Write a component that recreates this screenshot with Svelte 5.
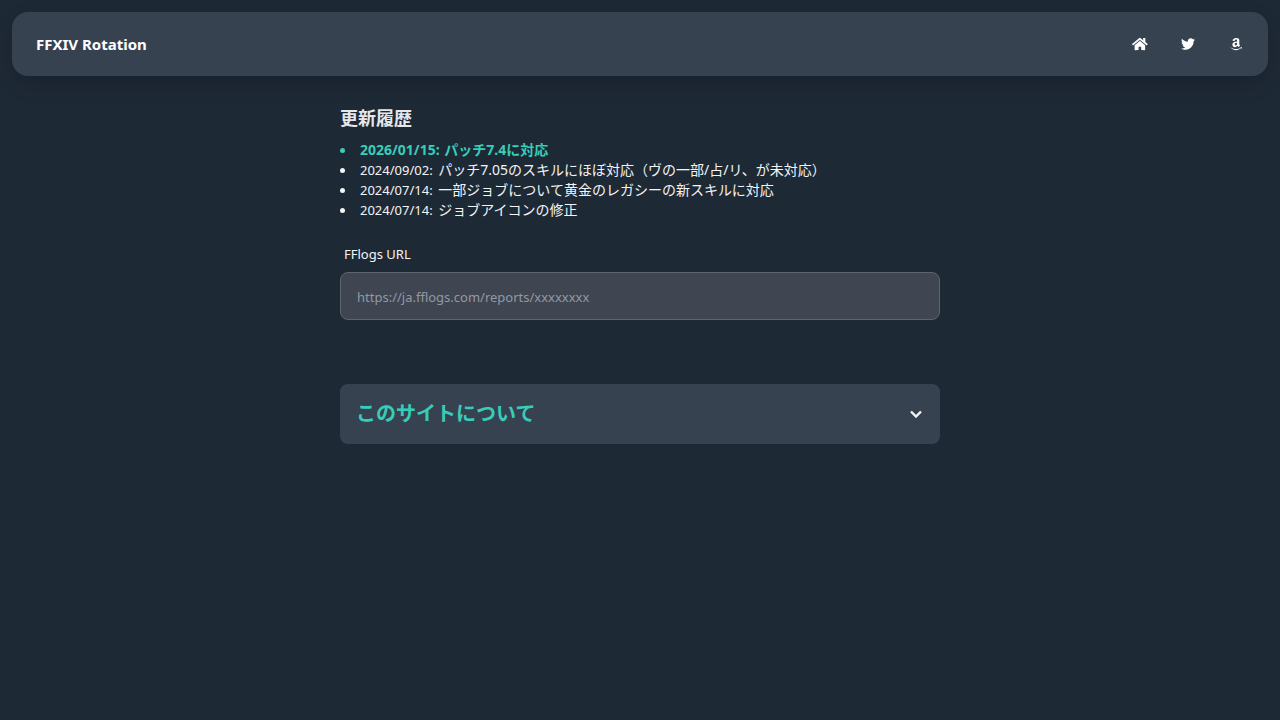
<script>
  const links = [
    {
      label: 'Home',
      href: '#home',
      viewBox: '0 0 576 512',
      path: 'M280.37 148.26L96 300.11V464a16 16 0 0 0 16 16l112.06-.29a16 16 0 0 0 15.92-16V368a16 16 0 0 1 16-16h64a16 16 0 0 1 16 16v95.64a16 16 0 0 0 16 16.05L464 480a16 16 0 0 0 16-16V300L295.67 148.26a12.19 12.19 0 0 0-15.3 0zM571.6 251.47L488 182.56V44.05a12 12 0 0 0-12-12h-56a12 12 0 0 0-12 12v72.61L318.47 43a48 48 0 0 0-61 0L4.34 251.47a12 12 0 0 0-1.6 16.9l25.5 31A12 12 0 0 0 45.15 301l235.22-193.74a12.19 12.19 0 0 1 15.3 0L530.9 301a12 12 0 0 0 16.9-1.6l25.5-31a12 12 0 0 0-1.7-16.93z',
    },
    {
      label: 'Twitter',
      href: '#twitter',
      viewBox: '0 0 512 512',
      path: 'M459.37 151.716c.325 4.548.325 9.097.325 13.645 0 138.72-105.583 298.558-298.558 298.558-59.452 0-114.68-17.219-161.137-47.106 8.447.974 16.568 1.299 25.34 1.299 49.055 0 94.213-16.568 130.274-44.832-46.132-.975-84.792-31.188-98.112-72.772 6.498.974 12.995 1.624 19.818 1.624 9.421 0 18.843-1.3 27.614-3.573-48.081-9.747-84.143-51.98-84.143-102.985v-1.299c13.969 7.797 30.214 12.67 47.431 13.319-28.264-18.843-46.781-51.005-46.781-87.391 0-19.492 5.197-37.36 14.294-52.954 51.655 63.675 129.3 105.258 216.365 109.807-1.624-7.797-2.599-15.918-2.599-24.04 0-57.828 46.782-104.934 104.934-104.934 30.213 0 57.502 12.67 76.67 33.137 23.715-4.548 46.456-13.32 66.599-25.34-7.798 24.366-24.366 44.833-46.132 57.827 21.117-2.273 41.584-8.122 60.426-16.243-14.292 20.791-32.161 39.308-52.628 54.253z',
    },
    {
      label: 'Amazon',
      href: '#amazon',
      viewBox: '0 0 448 512',
      path: 'M257.2 162.7c-48.7 1.8-169.5 15.5-169.5 117.5 0 109.5 138.3 114 183.5 43.2 6.5 10.2 35.4 37.5 45.3 46.8l56.8-56S341 288.9 341 261.4V114.3C341 89 316.5 32 228.7 32 140.7 32 94 87 94 136.3l73.5 6.8c16.3-49.5 54.2-49.5 54.2-49.5 40.7-.1 35.5 29.8 35.5 69.1zm0 86.8c0 80-84.2 68-84.2 17.2 0-47.2 50.5-56.7 84.2-57.8v40.6zm136 163.5c-7.7 10-70 67-174.5 67S34.2 408.5 9.7 379c-6.8-7.7 1-11.3 5.5-8.3C88.5 415.2 203 488.5 387.7 401c7.5-3.7 13.3 2 5.5 12zm39.8 2.2c-6.5 15.8-16 26.8-21.2 31-5.5 4.5-9.5 2.7-6.5-3.8s19.3-46.5 12.7-55c-6.5-8.3-37-4.3-48-3.2-10.8 1-13 2-14-.3-2.3-5.7 21.7-15.5 37.5-17.5 15.7-1.8 41-.8 46 5.7 3.7 5.1 0 27.1-6.5 43.1z',
    },
  ];

  const updates = [
    { date: '2026/01/15', text: 'パッチ7.4に対応', latest: true },
    { date: '2024/09/02', text: 'パッチ7.05のスキルにほぼ対応（ヴの一部/占/リ、が未対応）' },
    { date: '2024/07/14', text: '一部ジョブについて黄金のレガシーの新スキルに対応' },
    { date: '2024/07/14', text: 'ジョブアイコンの修正' },
  ];

  let url = $state('');
</script>

<header>
  <a class="brand" href="#top">FFXIV Rotation</a>
  <nav>
    {#each links as link}
      <a class="icon" href={link.href} aria-label={link.label}>
        <svg viewBox={link.viewBox} fill="currentColor"><path d={link.path} /></svg>
      </a>
    {/each}
  </nav>
</header>

<main>
  <h2>更新履歴</h2>
  <ul>
    {#each updates as update}
      <li class:latest={update.latest}><time>{update.date}:</time> {update.text}</li>
    {/each}
  </ul>

  <div class="field">
    <label for="url">FFlogs URL</label>
    <input id="url" type="text" placeholder="https://ja.fflogs.com/reports/xxxxxxxx" bind:value={url} />
  </div>

  <button class="about" type="button" aria-expanded="false">
    <span>このサイトについて</span>
    <svg viewBox="0 0 12 8" fill="none" stroke="currentColor" stroke-width="2.4"><path d="M1 1.5l5 5 5-5" /></svg>
  </button>
</main>

<style>
  :global(body) {
    background: #1e2936;
    color: #f3f4f6;
    font-family: 'Noto Sans', 'Noto Sans CJK JP', sans-serif;
    font-size: 14px;
    line-height: 20px;
  }

  header {
    align-items: center;
    background: #374251;
    border-radius: 16px;
    box-shadow: 0 8px 20px rgba(0, 0, 0, 0.15);
    display: flex;
    height: 64px;
    justify-content: space-between;
    margin: 12px;
    padding: 0 8px 0 24px;
  }

  .brand {
    color: #fff;
    font-size: 15px;
    font-weight: 700;
    text-decoration: none;
  }

  nav {
    display: flex;
  }

  .icon {
    align-items: center;
    color: #fff;
    display: flex;
    height: 48px;
    justify-content: center;
    width: 48px;
  }

  .icon svg {
    height: 14px;
  }

  main {
    box-sizing: border-box;
    margin: 0 auto;
    max-width: 600px;
    padding-top: 16px;
  }

  h2 {
    color: #e5e7eb;
    font-size: 18px;
    font-weight: 700;
    line-height: 28px;
    margin: 0 0 8px;
  }

  ul {
    list-style: none;
    margin: 0;
    padding: 0;
  }

  li {
    align-items: center;
  }

  li::before {
    background: currentColor;
    border-radius: 50%;
    content: '';
    display: inline-block;
    height: 5px;
    margin-bottom: 2px;
    margin-right: 15px;
    vertical-align: middle;
    width: 5px;
  }

  time {
    font-size: 13px;
    margin-right: 2px;
  }

  .latest {
    color: #38cdb8;
    font-weight: 700;
  }

  .latest time {
    font-size: 14px;
    margin-right: 1px;
  }

  .field {
    display: flex;
    flex-direction: column;
    margin-top: 16px;
  }

  label {
    font-size: 13px;
    padding: 8px 4px;
  }

  input {
    background: #3f4551;
    border: 1px solid #5b6570;
    border-radius: 8px;
    box-sizing: border-box;
    color: #f3f4f6;
    font: inherit;
    font-size: 13px;
    height: 48px;
    padding: 2px 16px 0;
    width: 100%;
  }

  input::placeholder {
    color: #9299a3;
    opacity: 1;
  }

  .about {
    align-items: center;
    background: #374251;
    border: 0;
    border-radius: 8px;
    color: #f3f4f6;
    cursor: pointer;
    display: flex;
    font: inherit;
    height: 60px;
    justify-content: space-between;
    margin-top: 64px;
    padding: 0 18px 0 16px;
    width: 100%;
  }

  .about span {
    color: #38cdb8;
    font-size: 20px;
    font-weight: 600;
  }

  .about svg {
    width: 12px;
  }
</style>
